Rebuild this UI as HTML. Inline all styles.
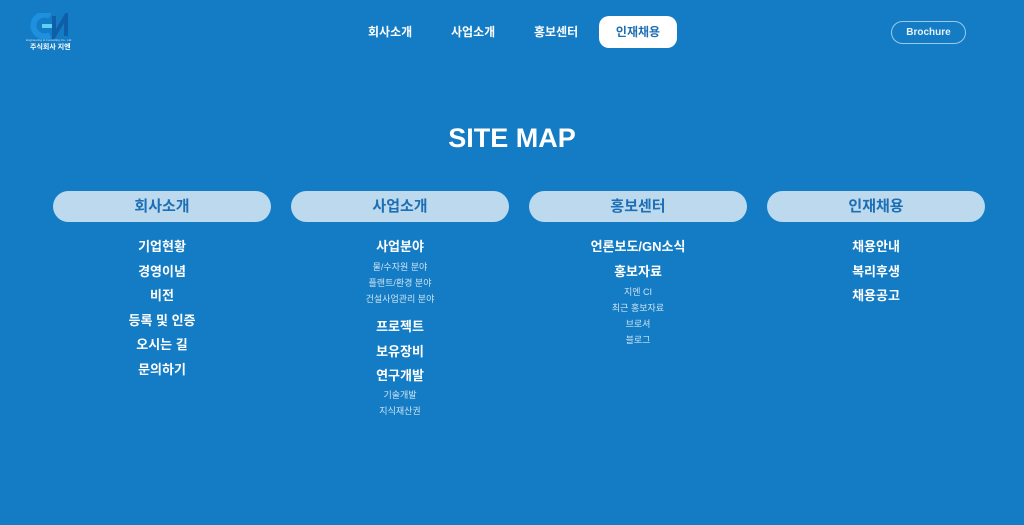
<!DOCTYPE html>
<html><head><meta charset="utf-8"><style>
*{margin:0;padding:0;box-sizing:border-box}
body{width:1024px;height:525px;overflow:hidden;background:#137cc4;font-family:"Liberation Sans","Noto Sans CJK KR",sans-serif;color:#fff;position:relative}
.abs{position:absolute}
.nav{top:16px;height:32px;font-size:12px;font-weight:bold;line-height:32px}
.pill{top:191px;width:218px;height:31px;border-radius:16px;background:#bcd9ee;color:#1d6fb5;font-size:15px;font-weight:bold;text-align:center;line-height:31px}
.col{top:238px;width:218px;text-align:center}
.b{font-size:13px;font-weight:bold;height:24.6px;line-height:18px}
.s{font-size:9px;color:#cfe3f3;height:16px;line-height:14px}
</style></head><body>
<div class="abs" style="left:30px;top:13px;width:44px;height:24px">
<svg width="44" height="26" viewBox="0 0 44 26"><path d="M20 3 A11 11 0 1 0 20 22" stroke="#1e90e0" stroke-width="6" fill="none"/><rect x="12" y="11" width="10" height="4" fill="#5fd0f5"/><path d="M24 3 L24 23 L36 3 L36 23" stroke="#0e5fa8" stroke-width="4" fill="none"/></svg>
</div>
<div class="abs" style="left:26px;top:38px;font-size:3px;color:#cfe3f3">Engineering &amp; Consulting Co., Ltd.</div>
<div class="abs" style="left:30px;top:42px;font-size:7px;font-weight:bold">주식회사 지엔</div>
<div class="abs nav" style="left:368px">회사소개</div>
<div class="abs nav" style="left:451px">사업소개</div>
<div class="abs nav" style="left:534px">홍보센터</div>
<div class="abs nav" style="left:599px;width:78px;background:#fff;border-radius:10px;color:#1d6fb5;text-align:center">인재채용</div>
<div class="abs" style="left:891px;top:21px;width:75px;height:23px;border:1px solid #9cc9ea;border-radius:12px;font-size:10px;font-weight:bold;text-align:center;line-height:21px;color:#e6f1fa">Brochure</div>
<div class="abs" style="left:0;width:1024px;top:123px;text-align:center;font-size:27px;font-weight:bold">SITE MAP</div>
<div class="abs pill" style="left:53px">회사소개</div>
<div class="abs pill" style="left:291px">사업소개</div>
<div class="abs pill" style="left:529px">홍보센터</div>
<div class="abs pill" style="left:767px">인재채용</div>
<div class="abs col" style="left:53px"><div class="b">기업현황</div><div class="b">경영이념</div><div class="b">비전</div><div class="b">등록 및 인증</div><div class="b">오시는 길</div><div class="b">문의하기</div></div>
<div class="abs col" style="left:291px"><div class="b" style="height:22px">사업분야</div><div class="s">물/수자원 분야</div><div class="s">플랜트/환경 분야</div><div class="s" style="height:26px">건설사업관리 분야</div><div class="b">프로젝트</div><div class="b">보유장비</div><div class="b" style="height:21px">연구개발</div><div class="s">기술개발</div><div class="s">지식재산권</div></div>
<div class="abs col" style="left:529px"><div class="b">언론보도/GN소식</div><div class="b" style="height:22px">홍보자료</div><div class="s">지엔 CI</div><div class="s">최근 홍보자료</div><div class="s">브로셔</div><div class="s">블로그</div></div>
<div class="abs col" style="left:767px"><div class="b">채용안내</div><div class="b">복리후생</div><div class="b">채용공고</div></div>
</body></html>
